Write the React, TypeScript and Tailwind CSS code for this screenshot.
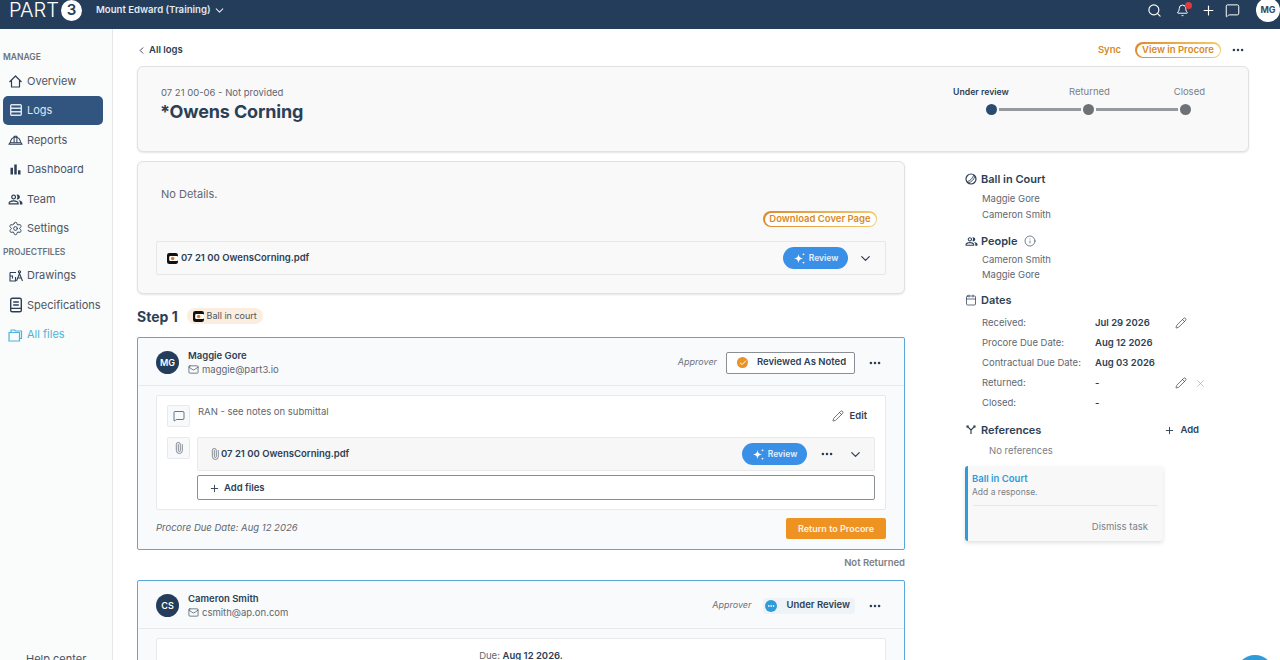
import React from "react";
import {
  ChevronDown,
  ChevronLeft,
  Search,
  Bell,
  Plus,
  MessageSquare,
  Ellipsis,
  Pencil,
  X,
  Info,
  Calendar,
  Mail,
  Paperclip,
  Settings,
  Check,
} from "lucide-react";
import { MdBarChart, MdOutlinePeopleAlt } from "react-icons/md";

const INK = "#2d3f55";

function BrandMark({ size = 11 }: { size?: number }) {
  return (
    <svg width={size} height={size} viewBox="0 0 12 12" className="shrink-0">
      <rect x="0" y="0" width="12" height="12" rx="2.5" fill="#111" />
      <rect x="2.4" y="3.2" width="9.6" height="5.6" rx="1.2" fill="#fff" />
      <circle cx="6.2" cy="6" r="1.9" fill="#e8761e" />
    </svg>
  );
}

function HomeIcon() {
  return (
    <svg width="15" height="15" viewBox="0 0 15 15" fill="none" stroke={INK} strokeWidth="1.2" strokeLinejoin="round">
      <path d="M1.5 8L7.5 2l6 6M3.5 6.5V13h8V6.5" />
    </svg>
  );
}

function LogsIcon() {
  return (
    <svg width="14" height="14" viewBox="0 0 14 14" fill="none" stroke="#dfe6ee" strokeWidth="1.4">
      <rect x="1.7" y="1.7" width="10.6" height="10.6" rx="1" />
      <path d="M1.7 5.2h10.6M1.7 8.8h10.6" />
    </svg>
  );
}

function HatIcon() {
  return (
    <svg width="16" height="14" viewBox="0 0 16 14" fill="none" stroke={INK} strokeWidth="1.1" strokeLinejoin="round">
      <path d="M1 11.5h14l-1-1.5H2z" />
      <path d="M2.5 10C2.8 6.5 5 4 8 4s5.2 2.5 5.5 6" />
      <path d="M6.5 10V3h3v7" />
    </svg>
  );
}

function SpecIcon() {
  return (
    <svg width="14" height="16" viewBox="0 0 14 16" fill="none" stroke={INK} strokeWidth="1.4">
      <rect x="1.7" y="1.2" width="10.6" height="13.6" rx="1.6" />
      <path d="M4.2 5h5.6M4.2 8h5.6M1.7 11.4h10.6" />
    </svg>
  );
}

function FolderIcon() {
  return (
    <svg width="15" height="14" viewBox="0 0 15 14" fill="none" stroke="#4fb3d9" strokeWidth="1.2" strokeLinejoin="round">
      <path d="M1 4.5h10.5V13H1z" />
      <path d="M3 4.5V2h3.5l1 1h6v7.5h-2" />
    </svg>
  );
}

function DrawingsIcon() {
  return (
    <svg width="14" height="14" viewBox="0 0 14 14" fill="none" stroke={INK} strokeWidth="1.1">
      <path d="M1 3.5h6M1 3.5V12h5.5V8M1 7h2.5v2.5" />
      <path d="M7.5 12l3-7.5 3 7.5M9.2 9h2.6" />
      <circle cx="10.5" cy="2.8" r="1.1" />
    </svg>
  );
}

function ForkIcon() {
  return (
    <svg width="10" height="10" viewBox="0 0 11 11" fill="none" stroke={INK} strokeWidth="1.3" className="ml-[1px]">
      <path d="M2 2l3.5 3.5V10M9 2L5.5 5.5" />
      <rect x="0.5" y="0.5" width="2.4" height="2.4" fill={INK} stroke="none" />
      <rect x="8.1" y="0.5" width="2.4" height="2.4" fill={INK} stroke="none" />
    </svg>
  );
}

function BallIcon() {
  return (
    <svg width="12" height="12" viewBox="0 0 12 12" fill="none" stroke={INK} strokeWidth="1.2">
      <circle cx="6" cy="6" r="5" />
      <path d="M2.2 8.6C4.8 8.2 8.2 4.8 8.6 2.2" strokeWidth="0.9" />
      <path d="M3.4 9.8C6.5 9 9 6.5 9.8 3.4" strokeWidth="0.9" />
    </svg>
  );
}

function SparkleIcon() {
  return (
    <svg width="13" height="13" viewBox="0 0 13 13" fill="#fff">
      <path d="M5.5 2C6 5 7 6 10 6.5 7 7 6 8 5.5 11 5 8 4 7 1 6.5 4 6 5 5 5.5 2Z" />
      <path d="M10.5 0.8c.1 1 .5 1.4 1.5 1.5-1 .1-1.4.5-1.5 1.5-.1-1-.5-1.4-1.5-1.5 1-.1 1.4-.5 1.5-1.5Z" />
      <path d="M10.5 9.2c.1 1 .5 1.4 1.5 1.5-1 .1-1.4.5-1.5 1.5-.1-1-.5-1.4-1.5-1.5 1-.1 1.4-.5 1.5-1.5Z" />
    </svg>
  );
}

function NavItem({
  icon,
  label,
  active,
  accent,
}: {
  icon: React.ReactNode;
  label: string;
  active?: boolean;
  accent?: boolean;
}) {
  const color = active
    ? "-mt-[1px] h-[29px] bg-[#31557f] text-[#dfe6ee] rounded-[5px]"
    : accent
      ? "h-[28px] text-[#4fb3d9]"
      : "h-[28px] text-[#4b5563]";
  return (
    <div className={`mx-[3px] mb-[1.5px] flex w-[100px] items-center gap-[4px] pl-[5px] text-[11px] ${color}`}>
      <span className="flex w-[15px] shrink-0 justify-center">{icon}</span>
      {label}
    </div>
  );
}

function Sidebar() {
  return (
    <aside className="h-full w-[113px] shrink-0 border-r border-[#e5e7eb] bg-[#fafbfb] pt-[23px]">
      <div className="mb-[4px] pl-[3px] text-[8.5px] leading-[11px] font-semibold text-[#6b7280]">MANAGE</div>
      <NavItem icon={<HomeIcon />} label="Overview" />
      <NavItem icon={<LogsIcon />} label="Logs" active />
      <NavItem icon={<HatIcon />} label="Reports" />
      <NavItem icon={<MdBarChart size={15} color={INK} />} label="Dashboard" />
      <NavItem icon={<MdOutlinePeopleAlt size={15} color={INK} />} label="Team" />
      <NavItem icon={<Settings size={15} color={INK} strokeWidth={1.5} />} label="Settings" />
      <div className="mt-[4px] mb-[4px] pl-[3px] text-[8.5px] leading-[11px] font-semibold text-[#6b7280]">PROJECTFILES</div>
      <NavItem icon={<DrawingsIcon />} label="Drawings" />
      <NavItem icon={<SpecIcon />} label="Specifications" />
      <NavItem icon={<FolderIcon />} label="All files" accent />
      <div className="mt-[302px] pl-[26px] text-[11px] text-[#4b5563]">Help center</div>
    </aside>
  );
}

function Header() {
  return (
    <header className="h-[29px] shrink-0 bg-[#233d5b] text-white">
      <div className="flex h-[20px] items-center pr-0 pl-[9px]">
        <span className="text-[20px] leading-[16px] font-[350]">PART</span>
        <span className="ml-[2px] flex h-[21px] w-[21px] items-center justify-center rounded-full bg-white text-[15px] font-semibold text-[#233d5b]">
          3
        </span>
        <span className="ml-[14px] text-[9.6px] font-semibold text-[#e4e9ef]">Mount Edward (Training)</span>
        <ChevronDown size={13} className="ml-[3px]" color="#e4e9ef" />
        <div className="ml-auto flex items-center">
          <Search size={15} strokeWidth={1.8} />
          <div className="relative ml-[14px]">
            <Bell size={13} strokeWidth={1.8} />
            <span className="absolute -top-[2px] -right-[3px] h-[7px] w-[7px] rounded-full bg-[#e0393e]" />
          </div>
          <Plus size={15} strokeWidth={1.8} className="ml-[12px]" />
          <MessageSquare size={15} strokeWidth={1.6} className="ml-[9px]" />
          <span className="ml-[16px] flex h-[24px] w-[24px] items-center justify-center rounded-full bg-white text-[9px] font-bold text-[#3a4a5c]">
            MG
          </span>
        </div>
      </div>
    </header>
  );
}

function OutlinePill({ children, className }: { children: React.ReactNode; className: string }) {
  return (
    <span className={`flex h-[16px] items-center justify-center rounded-full bg-gradient-to-r from-[#dd8a2a] to-[#f2cc6d] p-[1.5px] ${className}`}>
      <span className="flex h-full w-full items-center justify-center rounded-full bg-white text-[9.5px] font-semibold text-[#d98a23]">
        {children}
      </span>
    </span>
  );
}

function ReviewButton() {
  return (
    <span className="flex h-[22px] w-[65px] items-center justify-center gap-[3px] rounded-full bg-[#3a8fe6] text-[8.5px] font-semibold text-[#e6f1fc]">
      <SparkleIcon />
      Review
    </span>
  );
}

function Stepper() {
  return (
    <div className="w-[252px]">
      <div className="flex text-[9.5px] leading-[12px] text-[#7b8087]">
        <span className="w-[55px] text-[8.7px] font-semibold whitespace-nowrap text-[#2d3f55]">Under review</span>
        <span className="ml-[61px]">Returned</span>
        <span className="ml-auto">Closed</span>
      </div>
      <div className="mt-[6px] ml-[33px] flex items-center">
        <span className="h-[11px] w-[11px] rounded-full bg-[#2b4a72]" />
        <span className="mx-[2px] h-[3px] w-[82px] bg-[#96999d]" />
        <span className="h-[11px] w-[11px] rounded-full bg-[#6e7277]" />
        <span className="mx-[2px] h-[3px] w-[82px] bg-[#96999d]" />
        <span className="h-[11px] w-[11px] rounded-full bg-[#6e7277]" />
      </div>
    </div>
  );
}

function PersonHeader({
  initials,
  name,
  email,
  right,
}: {
  initials: string;
  name: string;
  email: string;
  right: React.ReactNode;
}) {
  return (
    <div className="flex h-[48px] items-center border-b border-[#e8e9eb] pt-[2px] pr-[22px] pl-[18px]">
      <span className="flex h-[23px] w-[23px] items-center justify-center rounded-full bg-[#233d5b] text-[9px] font-semibold text-white">
        {initials}
      </span>
      <div className="ml-[9px]">
        <div className="text-[9.5px] leading-[13px] font-semibold text-[#2d3f55]">{name}</div>
        <div className="mt-[1px] flex items-center gap-[3px] text-[9.5px] leading-[13px] text-[#5f6770]">
          <Mail size={11} color={INK} strokeWidth={1.4} />
          {email}
        </div>
      </div>
      <div className="ml-auto flex items-center">
        {right}
        <Ellipsis size={14} color={INK} strokeWidth={2.4} className="ml-[13px]" />
      </div>
    </div>
  );
}

function IconBox({ children }: { children: React.ReactNode }) {
  return (
    <span className="flex h-[22px] w-[23px] shrink-0 items-center justify-center rounded-[2px] border border-[#e7e9ec] bg-[#f8f9fa]">
      {children}
    </span>
  );
}

function StepCards() {
  return (
    <>
      <div className="mt-[10px] flex h-[24px] items-center">
        <span className="text-[14px] font-bold text-[#2d3f55]">Step 1</span>
        <span className="ml-[9px] flex h-[16px] w-[76px] items-center justify-center gap-[3px] rounded-full bg-[#fbeede] text-[9px] text-[#4b5563]">
          <BrandMark />
          Ball in court
        </span>
      </div>

      <section className="mt-[9px] h-[213px] rounded-[2px] border border-[#5aa7da] bg-[#f9fafb]">
        <PersonHeader
          initials="MG"
          name="Maggie Gore"
          email="maggie@part3.io"
          right={
            <>
              <span className="mb-[2px] text-[9px] text-[#6b7280] italic">Approver</span>
              <span className="ml-[9px] flex h-[22px] w-[129px] items-center rounded-[2px] border border-[#8a8f96] bg-white pl-[10px] text-[9.5px] font-semibold text-[#2d3f55]">
                <span className="flex h-[11px] w-[11px] items-center justify-center rounded-full bg-[#ea9226]">
                  <Check size={8} color="#fff" strokeWidth={3} />
                </span>
                <span className="ml-[9px]">Reviewed As Noted</span>
              </span>
            </>
          }
        />
        <div className="mx-[18px] mt-[9px] h-[115px] rounded-[2px] border border-[#e8e9eb] bg-white px-[10px] pt-[9px]">
          <div className="flex h-[32px]">
            <IconBox>
              <MessageSquare size={12} color={INK} strokeWidth={1.4} />
            </IconBox>
            <span className="ml-[8px] text-[9.5px] leading-[13px] text-[#5f6770]">RAN - see notes on submittal</span>
            <span className="mt-[4px] mr-[8px] ml-auto flex h-[14px] items-center gap-[5px] text-[9.5px] font-semibold text-[#2d3f55]">
              <Pencil size={12} strokeWidth={1.4} />
              Edit
            </span>
          </div>
          <div className="flex">
            <IconBox>
              <Paperclip size={12} color="#5f6770" strokeWidth={1.4} className="-rotate-45" />
            </IconBox>
            <div className="ml-[7px] flex-1">
              <div className="flex h-[34px] items-center rounded-[2px] border border-[#e8e9eb] bg-[#f7f7f8] pr-[11px] pl-[11px]">
                <Paperclip size={12} color="#5f6770" strokeWidth={1.4} className="-rotate-45" />
                <span className="text-[9.5px] font-semibold text-[#2d3f55]">07 21 00 OwensCorning.pdf</span>
                <span className="ml-auto">
                  <ReviewButton />
                </span>
                <Ellipsis size={14} color={INK} strokeWidth={2.4} className="ml-[13px]" />
                <ChevronDown size={15} color={INK} className="ml-[14px]" />
              </div>
              <div className="mt-[4px] flex h-[25px] items-center rounded-[2px] border border-[#8a8f96] bg-white pt-[1px] pl-[11px] text-[9.5px] font-semibold text-[#2d3f55]">
                <Plus size={11} strokeWidth={2} />
                <span className="ml-[4px]">Add files</span>
              </div>
            </div>
          </div>
        </div>
        <div className="mx-[18px] mt-[8px] flex items-center justify-between">
          <span className="text-[9.5px] text-[#5f6770] italic">Procore Due Date: Aug 12 2026</span>
          <span className="flex h-[21px] w-[100px] items-center justify-center rounded-[2px] bg-[#ee9322] text-[9px] font-semibold text-[#fdf2e2]">
            Return to Procore
          </span>
        </div>
      </section>

      <div className="mt-[6px] mb-[11px] text-right text-[9.5px] leading-[13px] font-semibold text-[#7b8087]">Not Returned</div>

      <section className="h-[120px] rounded-[2px] border border-[#5aa7da] bg-[#f9fafb]">
        <PersonHeader
          initials="CS"
          name="Cameron Smith"
          email="csmith@ap.on.com"
          right={
            <>
              <span className="mb-[2px] text-[9px] text-[#6b7280] italic">Approver</span>
              <span className="ml-[12px] flex h-[16px] items-center rounded-[3px] bg-[#eef3f7] pr-[5px] pl-[2px] text-[9.5px] font-semibold text-[#2d3f55]">
                <span className="flex h-[12px] w-[12px] items-center justify-center rounded-full bg-[#2f9bd8]">
                  <Ellipsis size={8} color="#fff" strokeWidth={3} />
                </span>
                <span className="ml-[9px]">Under Review</span>
              </span>
            </>
          }
        />
        <div className="mx-[18px] mt-[9px] h-[60px] rounded-[2px] border border-[#e8e9eb] bg-white pt-[10px] text-center text-[9.5px] text-[#5f6770]">
          Due: <span className="font-semibold text-[#2d3f55]">Aug 12 2026.</span>
        </div>
      </section>
    </>
  );
}

function SideHeading({ icon, label, children }: { icon: React.ReactNode; label: string; children?: React.ReactNode }) {
  return (
    <div className="flex h-[16px] items-center text-[11px] font-semibold text-[#2d3f55]">
      <span className="flex w-[16px] justify-start">{icon}</span>
      {label}
      {children}
    </div>
  );
}

function DateRow({ label, value, tools }: { label: string; value: string; tools?: React.ReactNode }) {
  return (
    <div className="flex h-[20px] items-center pl-[17px] text-[9.5px] text-[#5f6770]">
      <span className="w-[113px]">{label}</span>
      <span className="w-[80px] font-semibold text-[#2d3f55]">{value}</span>
      {tools}
    </div>
  );
}

function RightColumn() {
  return (
    <aside className="ml-[60px] w-[243px] shrink-0 pt-[10px] text-[9.5px] text-[#5f6770]">
      <SideHeading icon={<BallIcon />} label="Ball in Court" />
      <div className="mt-[4px] pl-[17px] leading-[16px]">
        <div>Maggie Gore</div>
        <div>Cameron Smith</div>
      </div>
      <div className="mt-[10px]">
        <SideHeading icon={<MdOutlinePeopleAlt size={13} color={INK} />} label="People">
          <Info size={12} strokeWidth={1.3} className="ml-[7px]" color={INK} />
        </SideHeading>
      </div>
      <div className="mt-[3px] pl-[17px] leading-[15px]">
        <div>Cameron Smith</div>
        <div>Maggie Gore</div>
      </div>
      <div className="mt-[10px]">
        <SideHeading icon={<Calendar size={12} color={INK} strokeWidth={1.5} />} label="Dates" />
      </div>
      <div className="mt-[5px]">
        <DateRow label="Received:" value="Jul 29 2026" tools={<Pencil size={12} color={INK} strokeWidth={1.4} />} />
        <DateRow label="Procore Due Date:" value="Aug 12 2026" />
        <DateRow label="Contractual Due Date:" value="Aug 03 2026" />
        <DateRow
          label="Returned:"
          value="-"
          tools={
            <>
              <Pencil size={12} color={INK} strokeWidth={1.4} />
              <X size={11} color="#9ca3af" strokeWidth={1.4} className="ml-[8px]" />
            </>
          }
        />
        <DateRow label="Closed:" value="-" />
      </div>
      <div className="mt-[9px] w-[234px]">
        <SideHeading icon={<ForkIcon />} label="References">
          <span className="ml-auto flex items-center gap-[5px] text-[9.5px] font-semibold">
            <Plus size={11} strokeWidth={2} />
            Add
          </span>
        </SideHeading>
      </div>
      <div className="mt-[6px] pl-[24px] leading-[13px] text-[#7b8087]">No references</div>
      <div className="mt-[9px] h-[75px] w-[198px] rounded-[3px] border-l-[3px] border-[#2f9bd8] bg-[#f8f8f9] pt-[6px] shadow-[0_2px_4px_rgba(0,0,0,0.12)]">
        <div className="pl-[4px] text-[9.5px] leading-[13px] font-semibold text-[#2f9bd8]">Ball in Court</div>
        <div className="pl-[4px] text-[8.5px] leading-[14px] text-[#7b8087]">Add a response.</div>
        <div className="mx-[5px] mt-[6px] border-t border-[#e5e7eb]" />
        <div className="mt-[14px] pr-[15px] text-right text-[9.5px] leading-[13px] text-[#7b8087]">Dismiss task</div>
      </div>
    </aside>
  );
}

export default function App() {
  return (
    <div className="relative flex h-[660px] w-[1280px] flex-col overflow-hidden bg-white font-[Inter,sans-serif]">
      <Header />
      <div className="flex min-h-0 flex-1">
        <Sidebar />
        <main className="flex-1 pr-[31px] pl-[24px]">
          <div className="-ml-px flex h-[37px] items-center pt-[5px] pr-[1px]">
            <ChevronLeft size={11} color={INK} strokeWidth={2} />
            <span className="ml-[2px] text-[9.5px] font-semibold text-[#2d3f55]">All logs</span>
            <span className="ml-auto text-[9.5px] font-semibold text-[#d98a23]">Sync</span>
            <OutlinePill className="ml-[14px] w-[86px]">View in Procore</OutlinePill>
            <Ellipsis size={14} color={INK} strokeWidth={2.4} className="mr-[3px] ml-[10px]" />
          </div>
          <section className="flex h-[86px] justify-between rounded-[6px] border border-[#e0e1e3] bg-[#f9f9fa] pt-[19px] pr-[43px] pl-[23px] shadow-[0_1px_2px_rgba(0,0,0,0.1)]">
            <div>
              <div className="text-[9.5px] leading-[13px] text-[#5f6770]">07 21 00-06 - Not provided</div>
              <div className="mt-[1px] -ml-[1px] text-[18px] leading-[24px] font-bold tracking-[-0.15px] text-[#2d3f55]">*Owens Corning</div>
            </div>
            <Stepper />
          </section>
          <div className="mt-[9px] flex">
            <div className="w-[768px] shrink-0">
              <section className="h-[133px] rounded-[6px] border border-[#e0e1e3] bg-[#f9f9fa] px-[18px] pt-[25px] shadow-[0_1px_2px_rgba(0,0,0,0.1)]">
                <div className="pl-[5px] text-[11px] leading-[14px] text-[#5f6770]">No Details.</div>
                <div className="mt-[10px] flex justify-end pr-[9px]">
                  <OutlinePill className="w-[114px]">Download Cover Page</OutlinePill>
                </div>
                <div className="mt-[14px] flex h-[34px] items-center rounded-[2px] border border-[#e6e7e9] bg-[#f9f9fa] pr-[12px] pl-[10px]">
                  <BrandMark />
                  <span className="ml-[3px] text-[9.5px] font-semibold text-[#2d3f55]">07 21 00 OwensCorning.pdf</span>
                  <span className="ml-auto">
                    <ReviewButton />
                  </span>
                  <ChevronDown size={15} color={INK} className="ml-[10px]" />
                </div>
              </section>
              <StepCards />
            </div>
            <RightColumn />
          </div>
        </main>
      </div>
      <span className="absolute right-[6px] -bottom-[33px] h-[38px] w-[38px] rounded-full bg-[#2f9bd8]" />
    </div>
  );
}
